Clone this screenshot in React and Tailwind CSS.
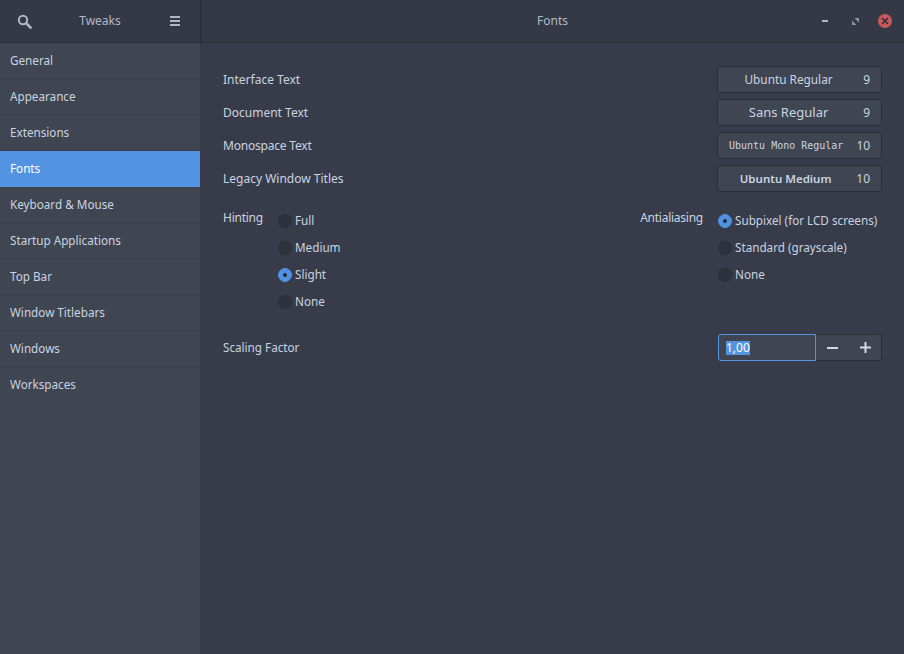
const font = { fontFamily: '"Noto Sans", sans-serif' };
const side = ["General","Appearance","Extensions","Fonts","Keyboard & Mouse","Startup Applications","Top Bar","Window Titlebars","Windows","Workspaces"];
const fonts = [
  ["Interface Text","text-[12px]","Ubuntu Regular","9","text-[11.8px] pr-[7px]",""],
  ["Document Text","text-[12px]","Sans Regular","9","text-[13px] pr-[7px]",""],
  ["Monospace Text","text-[12px] tracking-[-0.2px]","Ubuntu Mono Regular","10","text-[10px] pr-[5px]",'"DejaVu Sans Mono", monospace'],
  ["Legacy Window Titles","text-[12px]","Ubuntu Medium","10","text-[11.5px] font-semibold pr-[6px]",""],
];
function Radio({ label, on }) {
  return (
    <div className="flex items-center h-[27px]">
      <span className={"flex items-center justify-center w-[14px] h-[14px] rounded-full border " + (on ? "bg-[#4f92e2] border-[#4f92e2]" : "bg-[#2e323d] border-[#2b2f3a]")}>
        {on && <span className="w-[4px] h-[4px] rounded-full bg-[#23272f]" />}
      </span>
      <span className="ml-[3px] text-[11.7px] whitespace-nowrap text-[#c9d3e0]">{label}</span>
    </div>
  );
}
export default function App() {
  return (
    <div style={font} className="w-[904px] h-[654px] flex flex-col bg-[#383c4a] text-[12px] text-[#c9d3e0] overflow-hidden">
      <header className="h-[43px] flex shrink-0 border-b border-[#2b2e39] bg-[#353945]">
        <div className="w-[201px] shrink-0 flex items-center border-r border-[#2b2e39] pl-[17px] pr-[20px]">
          <svg width="15" height="15" viewBox="0 0 15 15" fill="none" stroke="#afb8c6">
            <circle cx="6" cy="6" r="4.2" strokeWidth="2"/>
            <path d="M9.2 9.2L13.6 13.6" strokeWidth="2.6" strokeLinecap="round"/>
          </svg>
          <span className="flex-1 text-center text-[12px] text-[#afb8c6] pr-[2px]">Tweaks</span>
          <div className="flex flex-col gap-[2px] w-[10px]">
            <span className="h-[2px] bg-[#afb8c6]" /><span className="h-[2px] bg-[#afb8c6]" /><span className="h-[2px] bg-[#afb8c6]" />
          </div>
        </div>
        <div className="flex-1 relative flex items-center justify-center text-[#afb8c6]">
          <span className="text-[12px]">Fonts</span>
          <div className="absolute right-[12px] top-[14px] flex items-center">
            <span className="w-[6px] h-[2px] bg-[#afb8c6]" />
            <svg className="ml-[24px]" width="7" height="7" viewBox="0 0 7 7" fill="#8e96a4"><path d="M2.5 0H7V4.5ZM0 2.5V7H4.5Z"/></svg>
            <span className="ml-[19px] w-[14px] h-[14px] rounded-full bg-[#cc575d] flex items-center justify-center">
              <svg width="8" height="8" viewBox="0 0 8 8" stroke="#2f333d" strokeWidth="1.7"><path d="M1 1L7 7M7 1L1 7"/></svg>
            </span>
          </div>
        </div>
      </header>
      <div className="flex-1 flex min-h-0">
        <aside className="w-[201px] shrink-0 bg-[#404552] border-r border-[#353844]">
          {side.map((s) => (
            <div key={s} className={"h-[36px] pl-[10px] flex items-center text-[11.7px] " + (s === "Fonts" ? "bg-[#5294e2] text-white" : s === "Workspaces" ? "text-[#c9d3e0]" : "border-b border-[#383c48] text-[#c9d3e0]")}>{s}</div>
          ))}
        </aside>
        <main className="flex-1 pl-[22px] pr-[22px] pt-[23px]">
          <div className="flex flex-col gap-[6px]">
            {fonts.map(([l, ls, f, n, c, ff]) => (
              <div key={l} className="flex items-center justify-between h-[27px]">
                <span className={ls}>{l}</span>
                <div className="w-[165px] h-[27px] flex items-center pl-[11px] pr-[11px] rounded-[3px] bg-[#404552] border border-[#2b2e39] text-[#c9d3e0]">
                  <span style={ff ? { fontFamily: ff } : undefined} className={"flex-1 text-center whitespace-nowrap " + c}>{f}</span>
                  <span className="text-[12px] ml-[8px]">{n}</span>
                </div>
              </div>
            ))}
          </div>
          <div className="flex justify-between mt-[15px]">
            <div className="flex">
              <span className="w-[55px] leading-[22px] tracking-[-0.25px]">Hinting</span>
              <div className="flex flex-col">
                <Radio label="Full" /><Radio label="Medium" /><Radio label="Slight" on /><Radio label="None" />
              </div>
            </div>
            <div className="flex">
              <span className="mr-[15px] leading-[22px] tracking-[-0.25px]">Antialiasing</span>
              <div className="flex flex-col w-[164px]">
                <Radio label="Subpixel (for LCD screens)" on /><Radio label="Standard (grayscale)" /><Radio label="None" />
              </div>
            </div>
          </div>
          <div className="flex items-center justify-between mt-[19px] h-[27px]">
            <span className="text-[11.7px]">Scaling Factor</span>
            <div className="flex w-[164px] h-[27px]">
              <div className="w-[98px] flex items-center pl-[7px] rounded-l-[3px] bg-[#404552] border border-[#5294e2]">
                <span className="bg-[#5294e2] text-white leading-[14px]">1,00</span>
              </div>
              <div className="flex-1 flex items-center rounded-r-[3px] bg-[#404552] border border-l-0 border-[#2b2e39]">
                <div className="flex-1 flex justify-center"><span className="w-[11px] h-[2px] bg-[#d3dae3]" /></div>
                <div className="flex-1 flex justify-center pl-[1px]">
                  <svg width="11" height="11" viewBox="0 0 11 11" fill="#d3dae3"><path d="M4.5 0H6.5V4.5H11V6.5H6.5V11H4.5V6.5H0V4.5H4.5Z"/></svg>
                </div>
              </div>
            </div>
          </div>
        </main>
      </div>
    </div>
  );
}
